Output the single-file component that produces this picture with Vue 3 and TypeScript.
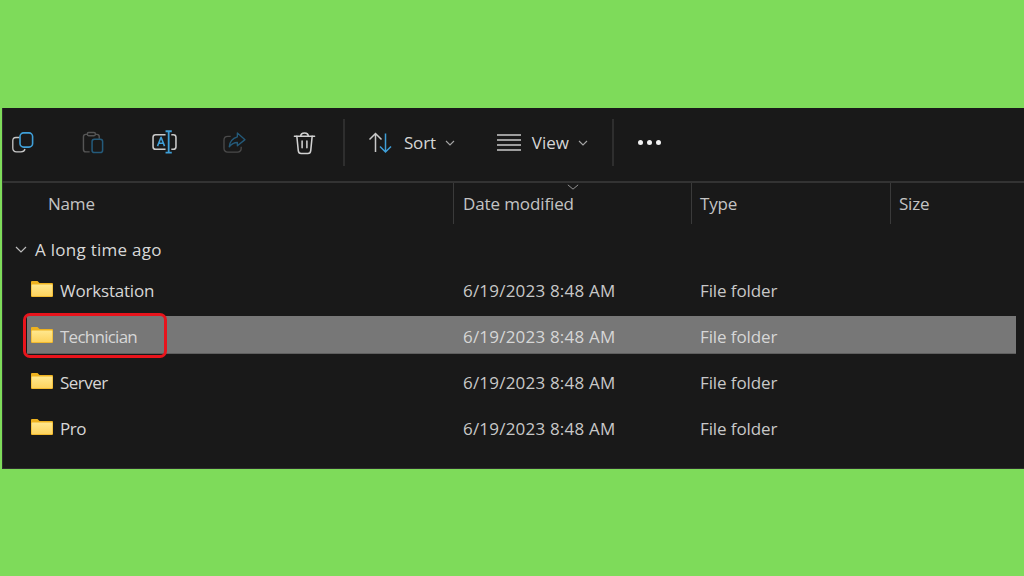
<script setup lang="ts">
const rows: string[] = ['Workstation', 'Technician', 'Server', 'Pro']
const date = '6/19/2023 8:48 AM'
</script>

<template>
  <div class="page">
    <div class="window">
      <div class="toolbar">
        <svg class="ic first" viewBox="0 0 22 21" fill="none" stroke-width="1.3" stroke-linejoin="round">
          <path d="M7.5 5.5 H4 Q0.8 5.5 0.8 8.8 V16 Q0.8 19.8 4.5 19.8 H9 Q12.3 19.8 13 17" stroke="#c9c9c9"/>
          <rect x="8" y="0.9" width="12.6" height="14.2" rx="3.6" stroke="#3f9fd8" stroke-width="1.6"/>
        </svg>
        <svg class="ic second" viewBox="0 0 24 24" fill="none" stroke-width="1.5" stroke-linejoin="round">
          <path d="M5.5 3.5 H4 Q1.5 3.5 1.5 6 V19 Q1.5 21.8 4 21.8 H8" stroke="#555"/>
          <path d="M14 3.5 H15.5 Q18 3.5 18 6 V8" stroke="#555"/>
          <rect x="5.5" y="1.5" width="8.5" height="3.5" rx="1.5" stroke="#555"/>
          <rect x="10.5" y="8.5" width="11" height="14" rx="2.5" stroke="#245a7a" stroke-width="1.6"/>
        </svg>
        <svg class="ic third" viewBox="0 0 24 24" fill="none" stroke-width="1.5" stroke-linejoin="round">
          <path d="M13 4.5 H3.5 Q1 4.5 1 7 V16 Q1 18.5 3.5 18.5 H13" stroke="#c9c9c9"/>
          <path d="M18.5 4.5 H20.5 Q23 4.5 23 7 V16 Q23 18.5 20.5 18.5 H18.5" stroke="#c9c9c9"/>
          <path d="M13 1.2 H19 M16 1.2 V21.8 M13 21.8 H19" stroke="#3f9fd8" stroke-width="1.7"/>
          <path d="M5.3 15.5 L8.7 7 L12 15.5 M6.4 12.8 H11" stroke="#3f9fd8" stroke-width="1.5"/>
        </svg>
        <svg class="ic fourth" viewBox="0 0 24 22" fill="none" stroke-width="1.4" stroke-linejoin="round">
          <path d="M8 4.5 H5 Q1 4.5 1 8.5 V17 Q1 21 5 21 H15 Q19 21 19 17 V15.5" stroke="#4a4a4a"/>
          <path d="M15 1 L23 8 L15 14.5 V11 Q10 11 6.5 15.5 Q7 7.5 15 5 Z" stroke="#245a7a"/>
        </svg>
        <svg class="ic fifth" viewBox="0 0 24 24" fill="none" stroke="#d2d2d2" stroke-width="1.6" stroke-linecap="round" stroke-linejoin="round">
          <path d="M1.5 5 H22.5 M8 5 Q8 1.5 12 1.5 Q16 1.5 16 5"/>
          <path d="M4 5 L5.5 20 Q5.8 23 8.5 23 H15.5 Q18.2 23 18.5 20 L20 5"/>
          <path d="M9.5 10 V17 M14.5 10 V17"/>
        </svg>
        <span class="sep first-sep"></span>
        <svg class="ic sort-ic" viewBox="0 0 24 24" fill="none" stroke-width="1.5">
          <path d="M7 21 V2.5 M1 8.5 L7 2.5 L13 8.5" stroke="#c9c9c9"/>
          <path d="M17 2.5 V21 M11.5 15.5 L17 21 L22.5 15.5" stroke="#3f9fd8"/>
        </svg>
        <span class="tool-label sort-label">Sort</span>
        <svg class="chev sort-chev" viewBox="0 0 10 6" fill="none" stroke="#a5a5a5" stroke-width="1.1"><path d="M1 1 L5 5 L9 1"/></svg>
        <svg class="ic view-ic" viewBox="0 0 24 17" fill="none" stroke="#c9c9c9" stroke-width="1.3">
          <path d="M0 1 H24 M0 6 H24 M0 11 H24 M0 16 H24"/>
        </svg>
        <span class="tool-label view-label">View</span>
        <svg class="chev view-chev" viewBox="0 0 10 6" fill="none" stroke="#a5a5a5" stroke-width="1.1"><path d="M1 1 L5 5 L9 1"/></svg>
        <span class="sep second-sep"></span>
        <span class="dots"><i></i><i></i><i></i></span>
      </div>

      <div class="header">
        <div class="col name-col">Name</div>
        <div class="col date-col">Date modified</div>
        <div class="col type-col">Type</div>
        <div class="col size-col">Size</div>
        <svg class="sort-caret" viewBox="0 0 14 7" fill="none" stroke="#9a9a9a" stroke-width="1.1"><path d="M1 1 L7 6 L13 1"/></svg>
      </div>

      <div class="group">
        <svg class="group-chev" viewBox="0 0 12 7" fill="none" stroke="#bdbdbd" stroke-width="1.2"><path d="M1 1 L6 6 L11 1"/></svg>
        <span>A long time ago</span>
      </div>

      <div class="list">
        <div v-for="(r, i) in rows" :key="r" class="row" :class="{ selected: i === 1 }">
          <div class="name-cell">
            <svg class="folder" viewBox="0 0 22 16">
              <defs>
                <linearGradient :id="'f' + i" x1="0" y1="0" x2="0" y2="1">
                  <stop offset="0" stop-color="#ffe88f"/>
                  <stop offset="1" stop-color="#fdd35e"/>
                </linearGradient>
              </defs>
              <path d="M0 1 Q0 0 1 0 H6.5 L8.5 2 H21 Q22 2 22 3 V15 Q22 16 21 16 H1 Q0 16 0 15 Z" fill="#eeb21f"/>
              <rect x="0.6" y="3.4" width="20.8" height="11.8" rx="0.6" :fill="'url(#f' + i + ')'"/>
            </svg>
            <span class="name-text" :class="{ tight: i > 1, tighter: i === 1 }">{{ r }}</span>
          </div>
          <div class="date-cell">{{ date }}</div>
          <div class="type-cell">File folder</div>
        </div>
      </div>

      <div class="callout"></div>
    </div>
  </div>
</template>

<style>
html, body { margin: 0; background: #7edb5a; }
</style>

<style scoped>
.page {
  width: 1024px;
  height: 576px;
  padding: 108px 0 0 2px;
  box-sizing: border-box;
  background: #7edb5a;
  overflow: hidden;
  font-family: "Open Sans", "Noto Sans", sans-serif;
}
.window {
  position: relative;
  width: 1022px;
  height: 361px;
  background: #191919;
  box-shadow: inset 1px 0 #2e2e2e, inset 0 -1px #2e2e2e;
  overflow: hidden;
}
.toolbar {
  height: 69px;
  padding-bottom: 4px;
  border-bottom: 2px solid #333;
  display: flex;
  align-items: center;
  box-sizing: content-box;
}
.ic { flex: none; display: block; }
.first { width: 22px; height: 21px; margin-left: 10px; }
.second { width: 23px; height: 25px; margin-left: 48px; }
.third { width: 25px; height: 25px; margin-left: 47px; }
.fourth { width: 23px; height: 21px; margin-left: 46px; }
.fifth { width: 23px; height: 24px; margin-left: 47px; }
.sep { flex: none; width: 2px; height: 47px; background: #2e2e2e; }
.first-sep { margin-left: 27px; }
.sort-ic { width: 25px; height: 24px; margin-left: 23px; }
.tool-label { font-size: 17px; color: #d6d6d6; letter-spacing: -0.2px; }
.sort-label { margin-left: 11px; }
.chev { flex: none; width: 10px; height: 6px; }
.sort-chev { margin-left: 9px; }
.view-ic { width: 24px; height: 17px; margin-left: 42px; }
.view-label { margin-left: 11px; letter-spacing: 0; }
.view-chev { margin-left: 9px; }
.second-sep { margin-left: 24px; }
.dots { display: flex; gap: 4px; margin-left: 24px; }
.dots i { width: 5px; height: 5px; border-radius: 50%; background: #f2f2f2; display: block; }

.header {
  position: relative;
  display: grid;
  grid-template-columns: 451px 238px 199px 1fr;
  height: 41px;
  font-size: 17px;
  color: #c4c4c4;
  letter-spacing: -0.2px;
}
.col {
  display: flex;
  align-items: center;
  padding-left: 9px;
  border-left: 1px solid #3a3a3a;
  padding-bottom: 1px;
  box-sizing: border-box;
}
.name-col { border-left: 0; padding-left: 46px; }
.date-col { letter-spacing: -0.12px; }
.type-col, .size-col { padding-left: 8px; }
.sort-caret {
  position: absolute;
  left: 565px;
  top: 1px;
  width: 12px;
  height: 6px;
}
.group {
  height: 46px;
  display: flex;
  align-items: center;
  font-size: 17px;
  color: #d8d8d8;
  letter-spacing: 0.27px;
  box-sizing: border-box;
  padding: 5px 0 0 13px;
  gap: 8px;
}
.group-chev { width: 12px; height: 7px; flex: none; }
.list { display: flex; flex-direction: column; gap: 8px; }
.row {
  display: grid;
  grid-template-columns: 451px 238px 1fr;
  width: 1014px;
  height: 38px;
  align-items: center;
  font-size: 17px;
  color: #c8c8c8;
  letter-spacing: -0.2px;
  box-sizing: border-box;
}
.selected { background: #777; color: #d6d6d6; margin-left: 25px; width: 989px; grid-template-columns: 426px 238px 1fr; box-shadow: inset 0 -1px #5f5f5f; }
.name-cell { display: flex; align-items: center; padding-left: 29px; }
.selected .name-cell { padding-left: 4px; }
.folder { width: 22px; height: 16px; flex: none; }
.name-text { margin-left: 7px; color: #d6d6d6; padding-top: 3px; }
.tight { letter-spacing: -0.5px; }
.tighter { letter-spacing: -0.75px; }
.date-cell, .type-cell { padding: 3px 0 0 10px; }
.date-cell { letter-spacing: 0.2px; }
.type-cell { padding-left: 9px; letter-spacing: -0.1px; }
.callout {
  position: absolute;
  left: 21px;
  top: 205px;
  width: 144px;
  height: 45px;
  box-sizing: border-box;
  border: 3px solid #e8141c;
  border-radius: 7px;
}
</style>
